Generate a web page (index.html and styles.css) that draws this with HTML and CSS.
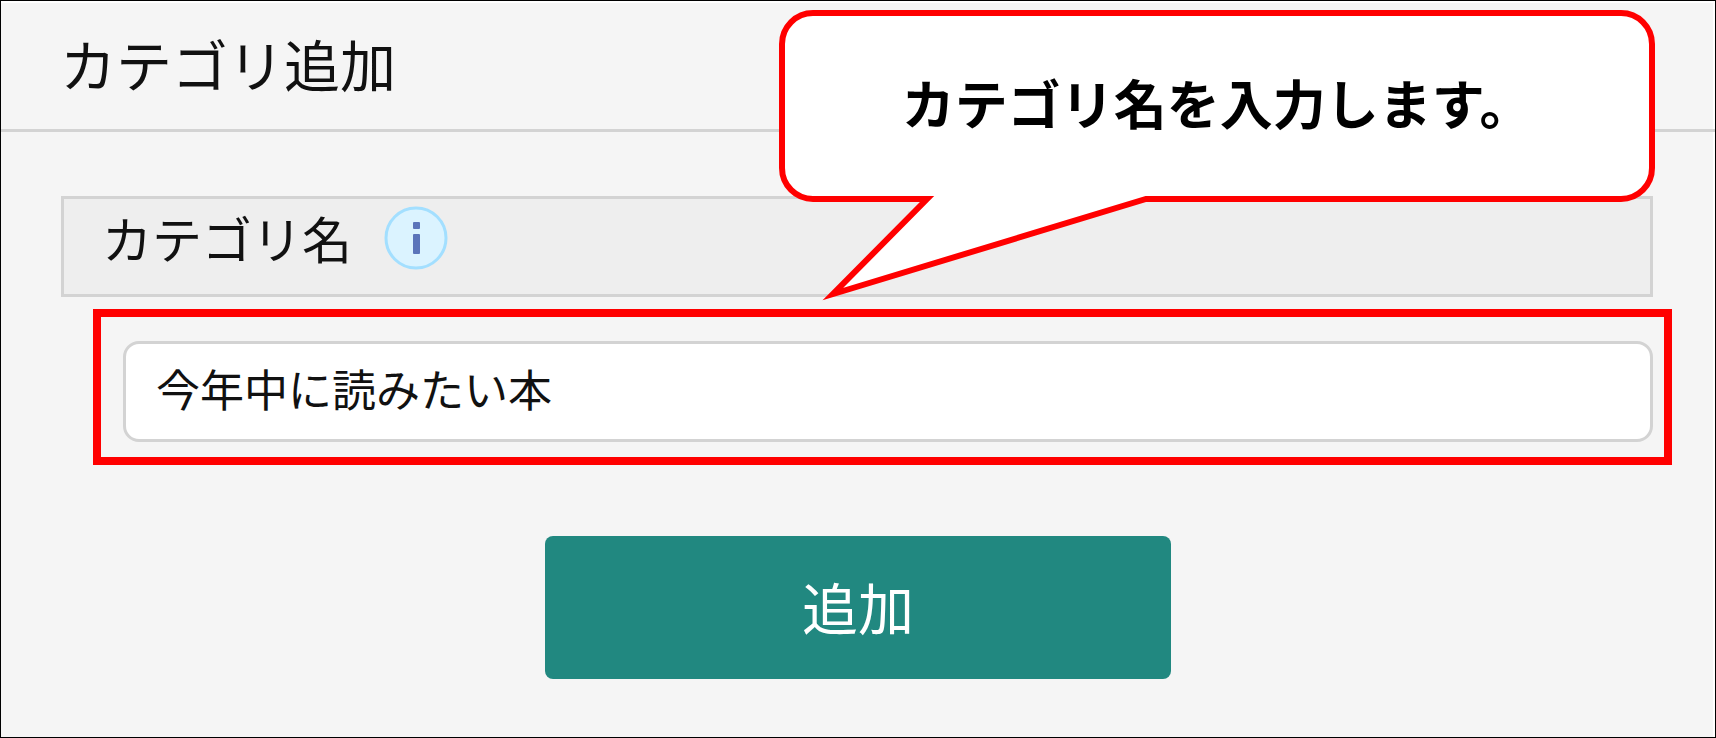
FILE: index.html
```
<!DOCTYPE html>
<html lang="ja">
<head>
  <meta charset="UTF-8" />
  <meta name="viewport" content="width=device-width, initial-scale=1.0" />
  <title>カテゴリ追加</title>
  <link rel="stylesheet" href="styles.css">
</head>
<body>
  <div class="page">
    <header class="header">
      <h1 class="title">カテゴリ追加</h1>
    </header>

    <form class="form">
      <div class="field-head">
        <label for="category-name">カテゴリ名</label>
        <button type="button" class="info" aria-label="info">
          <svg viewBox="0 0 64 64" width="64" height="64">
            <circle cx="32" cy="32" r="30" fill="#dbf3ff" stroke="#a3dfff" stroke-width="3" />
            <rect x="29" y="16" width="7" height="7" rx="1" fill="#5b74ba" />
            <rect x="29" y="28" width="7" height="20" rx="1" fill="#5b74ba" />
          </svg>
        </button>
      </div>

      <div class="highlight">
        <input type="text" id="category-name" class="text-input" value="今年中に読みたい本">
      </div>

      <button type="button" class="submit">追加</button>
    </form>

    <div class="callout">
      <p class="callout-text">カテゴリ名を入力します。</p>
      <svg class="callout-tail" viewBox="0 0 350 106" width="350" height="106">
        <path d="M112 0 H331 V3 L18 98 L106 9 Z" fill="#fff" />
        <path d="M98 3 H112 L18 98 L331 3 H346" fill="none" stroke="#f00" stroke-width="6" stroke-miterlimit="10" />
      </svg>
    </div>
  </div>
</body>
</html>
```
FILE: styles.css
```
* {
  box-sizing: border-box;
}

body {
  margin: 0;
  background-color: #f5f5f5;
  color: #111;
  font-family: "Noto Sans CJK JP", "Noto Sans", sans-serif;
}

.page {
  position: relative;
  min-height: 100vh;
  border: 1px solid #000;
  box-shadow: inset -2px 2px 0 #fff;
}

.header {
  padding: 22px 59px 26px;
  border-bottom: 3px solid #d3d3d3;
}

.title {
  margin: 0;
  font-size: 56px;
  font-weight: normal;
  line-height: 80px;
}

.form {
  display: flex;
  flex-direction: column;
  padding-top: 64px;
}

.field-head {
  display: flex;
  align-items: center;
  gap: 32px;
  margin: 0 62px 0 60px;
  padding: 3px 38px 21px;
  border: 3px solid #d3d3d3;
  background-color: #eee;
  font-size: 50px;
  line-height: 71px;
}

.info {
  display: flex;
  padding: 0;
  border: none;
  background: none;
  cursor: pointer;
}

.highlight {
  margin: 12px 43px 0 92px;
  padding: 24px 11px 15px 22px;
  border: 8px solid #f00;
}

.text-input {
  display: block;
  width: 100%;
  height: 101px;
  padding: 0 30px 8px;
  border: 3px solid #d3d3d3;
  border-radius: 16px;
  background-color: #fff;
  color: #111;
  font-family: inherit;
  font-size: 44px;
}

.submit {
  width: 36.5%;
  margin: 71px auto 0;
  padding: 30px 0 33px;
  border: none;
  border-radius: 8px;
  background-color: #218880;
  color: #fff;
  font-family: inherit;
  font-size: 56px;
  line-height: 80px;
  cursor: pointer;
}

.callout {
  position: absolute;
  top: 9px;
  right: 60px;
  width: 51.1%;
  padding: 46px 0 54px;
  border: 6px solid #f00;
  border-radius: 34px;
  background-color: #fff;
}

.callout-text {
  margin: 0;
  color: #000;
  font-size: 53px;
  font-weight: bold;
  line-height: 80px;
  text-align: center;
}

.callout-tail {
  position: absolute;
  top: 100%;
  left: 30px;
}
```
